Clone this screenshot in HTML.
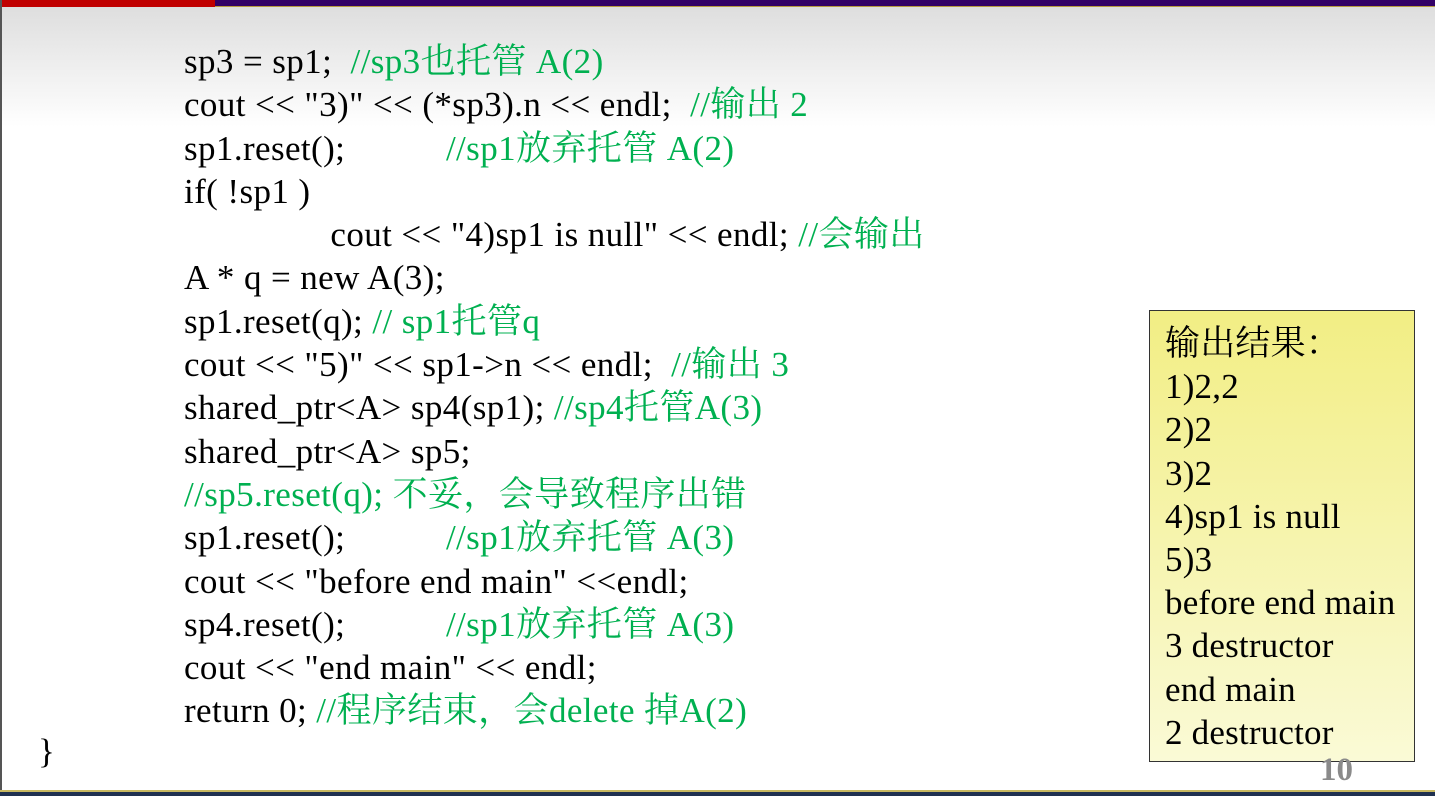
<!DOCTYPE html>
<html><head><meta charset="utf-8"><style>
body{margin:0;width:1435px;height:796px;overflow:hidden;position:relative;background:#fff;font-family:"Liberation Serif","Noto Serif CJK SC",serif;}
.bg{position:absolute;left:0;top:7px;width:1435px;height:120px;background:linear-gradient(#dedede,#fff);}
.red{position:absolute;left:0;top:0;width:215px;height:7px;background:#c00000;}
.pur{position:absolute;left:215px;top:0;width:1220px;height:6px;background:#330066;border-bottom:1px solid #b89a40;}
.lft{position:absolute;left:0;top:0;width:2px;height:796px;background:#555;}
.bot{position:absolute;left:0;top:790px;width:1435px;height:2px;background:#c8b860;}
.bot2{position:absolute;left:0;top:792px;width:1435px;height:4px;background:#1f3050;}
.code{position:absolute;left:184px;top:40px;font-size:35px;line-height:43.3px;color:#000;white-space:pre;letter-spacing:0.4px;}
.g{color:#00b050;}
.box{position:absolute;left:1149px;top:310px;width:266px;height:452px;border:1.5px solid #333;background:linear-gradient(#f2ee84,#fafad6);box-sizing:border-box;padding:11px 0 0 15px;font-size:35px;line-height:43.2px;white-space:pre;letter-spacing:0.2px;}
.num{position:absolute;left:1320px;top:752px;font-size:33px;font-weight:bold;color:#8a8a8a;}
.br{position:absolute;left:38px;top:732px;font-size:35px;}
</style></head><body>
<div class="bg"></div><div class="red"></div><div class="pur"></div><div class="lft"></div>
<div class="code">sp3 = sp1;  <span class="g">//sp3也托管 A(2)</span>
cout &lt;&lt; "3)" &lt;&lt; (*sp3).n &lt;&lt; endl;  <span class="g">//输出 2</span>
sp1.reset();           <span class="g">//sp1放弃托管 A(2)</span>
if( !sp1 )
                cout &lt;&lt; "4)sp1 is null" &lt;&lt; endl; <span class="g">//会输出</span>
A * q = new A(3);
sp1.reset(q); <span class="g">// sp1托管q</span>
cout &lt;&lt; "5)" &lt;&lt; sp1-&gt;n &lt;&lt; endl;  <span class="g">//输出 3</span>
shared_ptr&lt;A&gt; sp4(sp1); <span class="g">//sp4托管A(3)</span>
shared_ptr&lt;A&gt; sp5;
<span class="g">//sp5.reset(q); 不妥，会导致程序出错</span>
sp1.reset();           <span class="g">//sp1放弃托管 A(3)</span>
cout &lt;&lt; "before end main" &lt;&lt;endl;
sp4.reset();           <span class="g">//sp1放弃托管 A(3)</span>
cout &lt;&lt; "end main" &lt;&lt; endl;
return 0; <span class="g">//程序结束，会delete 掉A(2)</span></div>
<div class="br">}</div>
<div class="box">输出结果：
1)2,2
2)2
3)2
4)sp1 is null
5)3
before end main
3 destructor
end main
2 destructor</div>
<div class="num">10</div>
<div class="bot"></div><div class="bot2"></div>
</body></html>
